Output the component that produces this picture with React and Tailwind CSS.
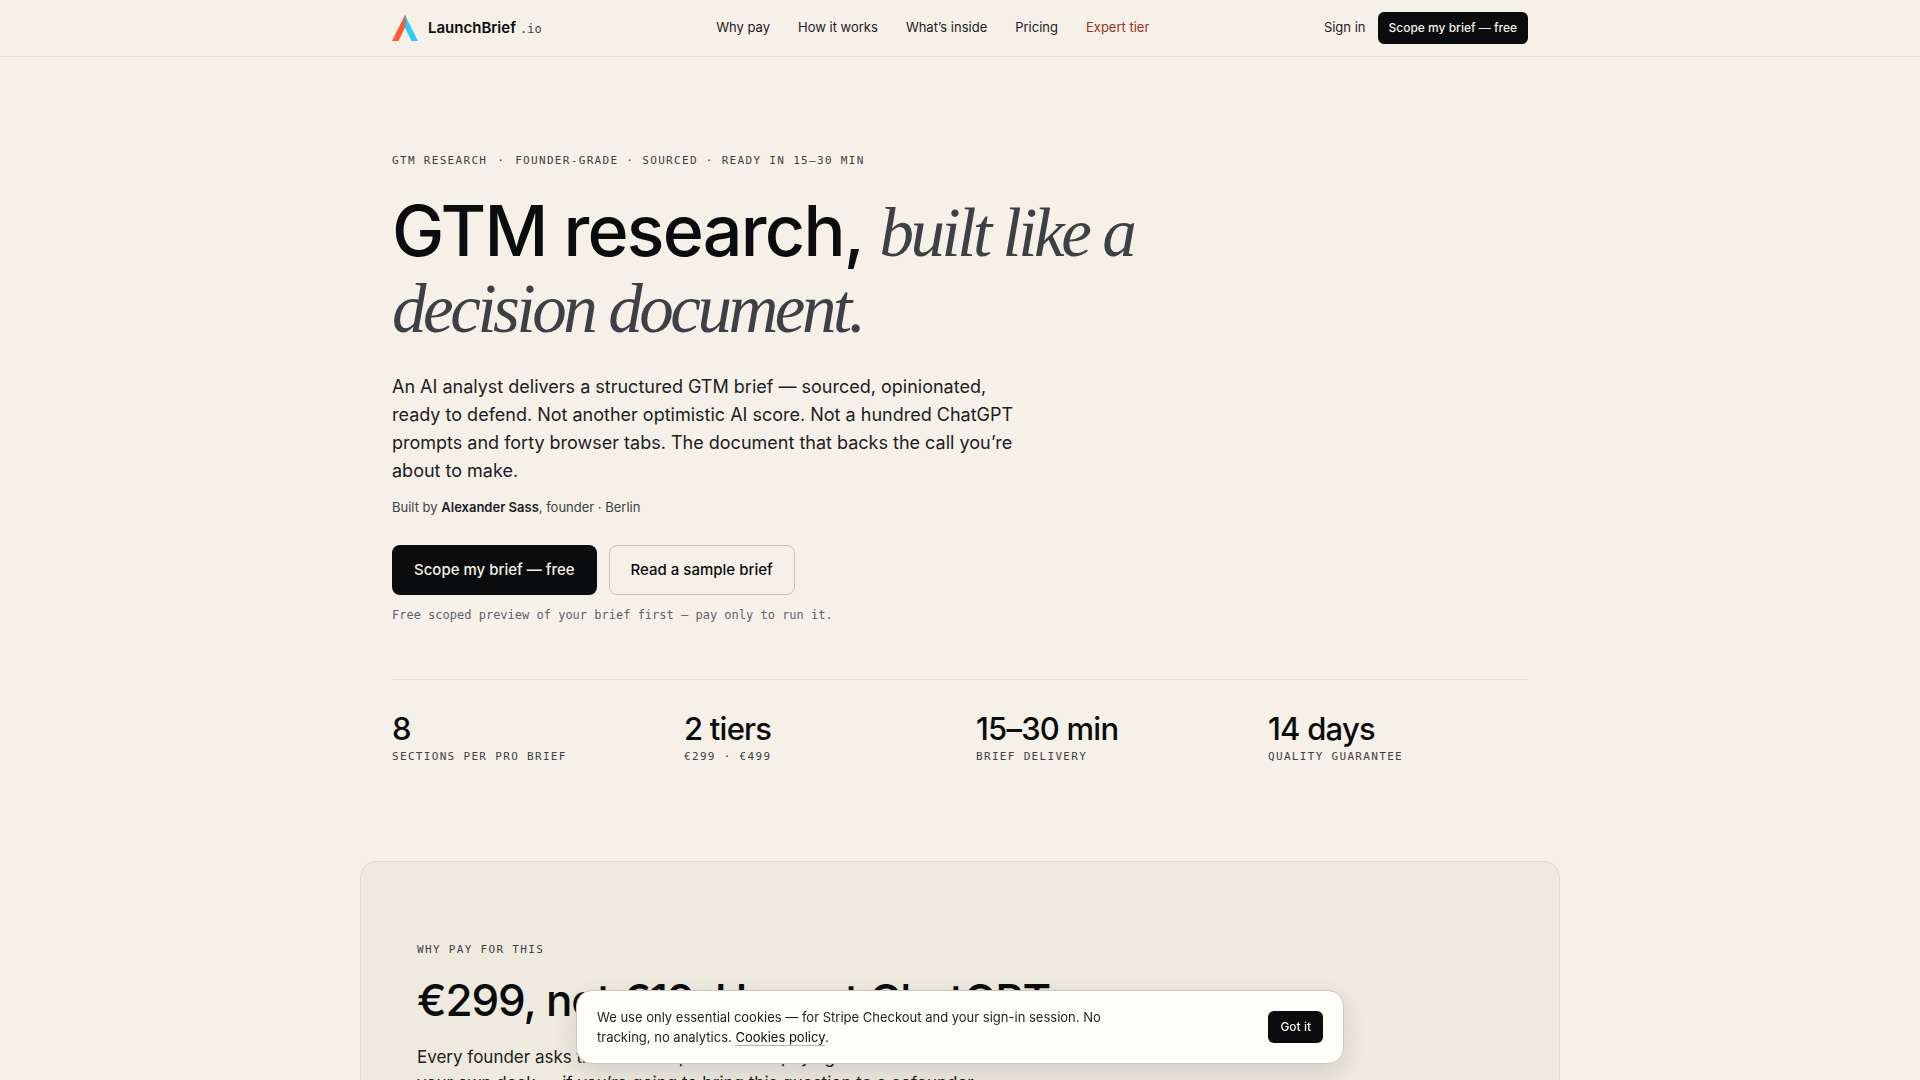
import { useState } from "react";

const navLinks = [
  { label: "Why pay", href: "#why" },
  { label: "How it works", href: "#how" },
  { label: "What’s inside", href: "#inside" },
  { label: "Pricing", href: "#pricing" },
];

const stats = [
  { value: "8", label: "Sections per Pro brief" },
  { value: "2 tiers", label: "€299 · €499" },
  { value: "15–30 min", label: "Brief delivery" },
  { value: "14 days", label: "Quality guarantee" },
];

const Logo = () => (
  <svg width="26" height="26" viewBox="0 0 26 26" aria-hidden="true">
    <path d="M13 0 L13 12.5 L6.6 26 L0 26 Z" fill="#ff5a36" />
    <path d="M13 0 L26 26 L19.4 26 L13 12.5 Z" fill="#2ec9fb" />
    <path d="M13 0 L14.2 2.4 L14 10 L13 12.5 L12 10 L11.8 2.4 Z" fill="#8b8787" opacity="0.75" />
  </svg>
);

const Eyebrow = ({ children }) => (
  <p className="font-['DejaVu_Sans_Mono',monospace] text-[11px] leading-4 tracking-[0.12em] uppercase text-[#3d4146]">
    {children}
  </p>
);

const Header = () => (
  <header className="border-b border-[#e2ddd7]">
    <div className="mx-auto flex h-14 max-w-[1200px] items-center justify-between px-8">
      <a href="#top" className="flex items-center gap-2.5">
        <Logo />
        <span className="flex items-baseline gap-1">
          <span className="text-[15px] font-semibold text-[#0a0c0d]">LaunchBrief</span>
          <span className="font-['DejaVu_Sans_Mono',monospace] text-xs text-[#3d4146]">.io</span>
        </span>
      </a>
      <nav className="flex items-center gap-7 text-[13px]">
        {navLinks.map((link) => (
          <a key={link.label} href={link.href}>
            {link.label}
          </a>
        ))}
        <a href="#expert" className="text-[#9a3421]">
          Expert tier
        </a>
      </nav>
      <div className="flex items-center gap-3">
        <a href="#signin" className="text-[13px]">
          Sign in
        </a>
        <button
          type="button"
          className="h-8 rounded-md bg-[#0a0c0d] px-[11px] text-xs font-medium text-[#f5f0e8]"
        >
          Scope my brief — free
        </button>
      </div>
    </div>
  </header>
);

const Hero = () => (
  <section className="mx-auto max-w-[1200px] px-8 pt-24">
    <Eyebrow>
      GTM research <span className="mx-0.5">·</span> Founder-grade · Sourced · Ready in 15–30 min
    </Eyebrow>
    <h1 className="mt-6 text-[70px] leading-[76px] font-medium tracking-tight text-[#0a0c0d]">
      GTM research,{" "}
      <em className="font-['Liberation_Serif',serif] text-[69px] leading-none font-normal tracking-tighter text-[#3d4146]">
        built like a
        <br />
        decision document.
      </em>
    </h1>
    <p className="mt-7 text-lg leading-7">
      An AI analyst delivers a structured GTM brief — sourced, opinionated,
      <br />
      ready to defend. Not another optimistic AI score. Not a hundred ChatGPT
      <br />
      prompts and forty browser tabs. The document that backs the call you’re
      <br />
      about to make.
    </p>
    <p className="mt-3 text-[13px] leading-5 text-[#3d4146]">
      Built by <strong className="font-semibold text-[#1c2023]">Alexander Sass</strong>, founder · Berlin
    </p>
    <div className="mt-7 flex gap-3">
      <button
        type="button"
        className="h-[50px] rounded-lg bg-[#0a0c0d] px-[22px] text-[15px] font-medium text-[#f5f0e8]"
      >
        Scope my brief — free
      </button>
      <button
        type="button"
        className="h-[50px] rounded-lg border border-[#c5c1bb] px-[21px] text-[15px] font-medium text-[#0a0c0d]"
      >
        Read a sample brief
      </button>
    </div>
    <p className="mt-3 font-['DejaVu_Sans_Mono',monospace] text-xs leading-4 text-[#5f6368]">
      Free scoped preview of your brief first — pay only to run it.
    </p>
    <dl className="mt-14 grid grid-cols-4 gap-8 border-t border-[#e2ddd7] pt-7">
      {stats.map((stat) => (
        <div key={stat.value} className="flex flex-col-reverse">
          <dt className="font-['DejaVu_Sans_Mono',monospace] text-[11px] leading-4 tracking-[0.12em] uppercase text-[#3d4146]">
            {stat.label}
          </dt>
          <dd className="text-[31px] leading-[41px] font-medium tracking-tight text-[#0a0c0d]">{stat.value}</dd>
        </div>
      ))}
    </dl>
  </section>
);

const WhyPay = () => (
  <section
    id="why"
    className="mx-auto mt-24 max-w-[1200px] rounded-2xl border border-[#dedacd] bg-[#eeeadf] px-14 py-20"
  >
    <Eyebrow>Why pay for this</Eyebrow>
    <h2 className="mt-4 text-[44px] leading-[52px] font-medium tracking-tight text-[#0a0c0d]">
      €299, not €19. Honest ChatGPT.
    </h2>
    <p className="mt-[18px] text-[17px] leading-[26px]">
      Every founder asks this at some point before paying for
      <br />
      your own deck — if you’re going to bring this question to a cofounder
    </p>
  </section>
);

const CookieNotice = ({ onClose }) => (
  <div className="fixed inset-x-0 bottom-4 mx-auto flex max-w-3xl items-center justify-between rounded-2xl border border-[#cbc8c0] bg-[#fffdf7] px-5 py-4 shadow-[0_8px_24px_rgba(10,12,13,0.12)]">
    <p className="max-w-[520px] text-[13px] leading-5">
      We use only essential cookies — for Stripe Checkout and your sign-in session. No tracking, no analytics.{" "}
      <a href="#cookies" className="border-b border-[#b5b3ae] text-[#0a0c0d]">
        Cookies policy
      </a>
      .
    </p>
    <button
      type="button"
      onClick={onClose}
      className="h-8 rounded-md bg-[#0a0c0d] px-3 text-xs font-medium text-[#f5f0e8]"
    >
      Got it
    </button>
  </div>
);

const App = () => {
  const [showCookies, setShowCookies] = useState(true);

  return (
    <div id="top" className="min-h-screen bg-[#f5f0e8] font-['Inter',sans-serif] text-[#1c2023]">
      <Header />
      <main>
        <Hero />
        <WhyPay />
      </main>
      {showCookies && <CookieNotice onClose={() => setShowCookies(false)} />}
    </div>
  );
};

export default App;
